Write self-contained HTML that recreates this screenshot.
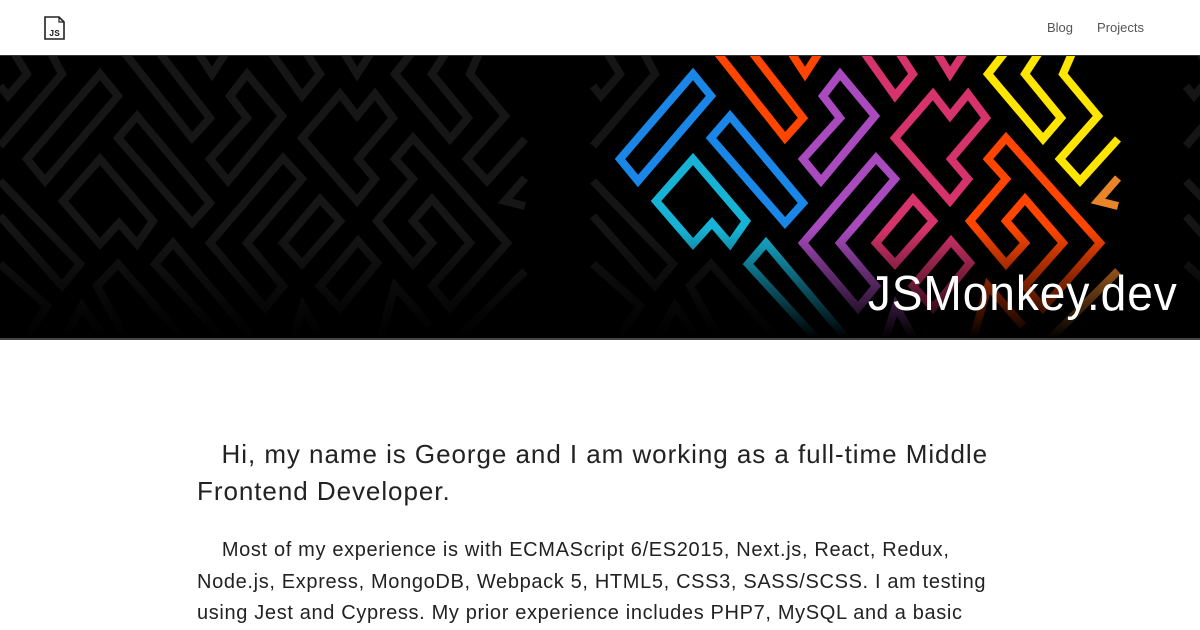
<!DOCTYPE html>
<html><head><meta charset="utf-8">
<style>
*{margin:0;padding:0;box-sizing:border-box}
body{width:1200px;height:630px;overflow:hidden;background:#fff;font-family:"Liberation Sans",sans-serif;color:#222}
header{height:55px;position:relative;background:#fff}
.logo{position:absolute;left:44px;top:16px}
nav{position:absolute;right:56px;top:20px;font-size:13px;color:#555}
nav span{margin-left:24px}
.banner{position:relative;height:285px;background:#000;overflow:hidden;border-top:1px solid #333;border-bottom:2px solid #444}
.banner svg{position:absolute;left:0;top:0}
.fade{position:absolute;left:0;right:0;bottom:0;height:110px;background:linear-gradient(rgba(0,0,0,0),#000)}
.title{position:absolute;right:22px;top:208px;color:#fff;font-size:49px;line-height:60px;letter-spacing:1px;transform:scaleX(.94);transform-origin:right center;white-space:nowrap}
.p1{position:absolute;left:197px;top:436px;font-size:26px;line-height:37px;white-space:nowrap;letter-spacing:0.95px}
.p2{position:absolute;left:197px;top:535px;font-size:20px;line-height:31.5px;white-space:nowrap;letter-spacing:0.65px}
</style></head><body>
<header>
<svg class="logo" width="22" height="24" viewBox="0 0 22 24"><path d="M1 1H15L20 6V23H1Z" fill="none" stroke="#222" stroke-width="1.6"/><path d="M15 1V6H20" fill="none" stroke="#222" stroke-width="1.2"/><text x="5" y="20" font-size="9" font-family="Liberation Mono,monospace" font-weight="bold" fill="#222">JS</text></svg>
<nav><span>Blog</span><span>Projects</span></nav>
</header>
<div class="banner">
<svg width="1200" height="285" viewBox="0 0 1200 285">
<defs>
<g id="m" fill="none" stroke-width="8" stroke-linejoin="miter">
<polygon points="27,103 100,18 118,40 45,125" style="stroke:var(--g,#1a86e8)"/>
<polygon points="118,82 137,60 210,147 192,167" style="stroke:var(--g,#1a86e8)"/>
<polygon points="63,145 100,103 153,165 137,188 119,167 100,188" style="stroke:var(--g,#17b3d6)"/>
<polyline points="123,-5 192,82 210,62 158,-5" style="stroke:var(--g,#ff4500)"/>
<polygon points="210,103 247,62 230,40 247,18 282,60 228,125" style="stroke:var(--g,#a94bbf)"/>
<polyline points="197,-5 212,18 227,-5" style="stroke:var(--g,#ff4500)"/>
<polyline points="270,-5 302,40 320,18 305,-5" style="stroke:var(--g,#d6336c)"/>
<polyline points="343,-5 357,18 372,-5" style="stroke:var(--g,#d6336c)"/>
<polygon points="302,82 340,38 357,60 375,38 393,62 358,103 375,123 357,145" style="stroke:var(--g,#d6336c)"/>
<polygon points="210,187 283,102 302,123 247,187 283,230 265,252" style="stroke:var(--g,#a94bbf)"/>
<polygon points="283,187 320,143 340,165 302,208" style="stroke:var(--g,#d6336c)"/>
<polygon points="320,230 358,185 377,207 340,252" style="stroke:var(--g,#d6336c)"/>
<polyline points="230,290 155,208 173,187 258,288" style="stroke:var(--g,#17b3d6)"/>
<polygon points="395,103 413,82 507,187 450,252 432,230 470,187 432,143 413,165 432,187 413,208 377,165 413,123" style="stroke:var(--g,#ff4500)"/>
<polyline points="413,-5 395,18 450,83 468,62 432,18 447,-5" style="stroke:var(--g,#ffe600)"/>
<polyline points="480,-5 470,18 505,60 467,103 487,125 525,83" style="stroke:var(--g,#ffe600)"/>
<polyline points="525,150 505,145 525,122" style="stroke:var(--g,#e8842a)"/>
<polyline points="525,215 450,290" style="stroke:var(--g,#e8842a)"/>
<polyline points="0,30 8,40 27,18 13,-5" style="stroke:#151515"/>
<polyline points="0,90 62,18 50,-5" style="stroke:#151515"/>
<polyline points="0,125 80,208 62,230 0,160" style="stroke:#151515"/>
<polyline points="0,208 47,250 27,280" style="stroke:#151515"/>
<polyline points="130,290 97,230 118,208 190,290" style="stroke:#151515"/>
<polyline points="60,290 82,250 110,290" style="stroke:#151515"/>
<polyline points="290,290 303,250 325,290" style="stroke:var(--g,#a94bbf)"/>
<polyline points="378,290 395,230 430,270" style="stroke:var(--g,#ff4500)"/>
</g>
</defs>
<use href="#m" x="0" y="0" style="--g:#161616"/>
<use href="#m" x="593" y="0"/>
<use href="#m" x="1186" y="0" style="--g:#161616"/>
</svg>
<div class="fade"></div>
<div class="title">JSMonkey.dev</div>
</div>
<div class="p1">&nbsp;&nbsp;&nbsp;Hi, my name is George and I am working as a full-time Middle<br>Frontend Developer.</div>
<div class="p2">&nbsp;&nbsp;&nbsp;&nbsp;Most of my experience is with ECMAScript 6/ES2015, Next.js, React, Redux,<br>Node.js, Express, MongoDB, Webpack 5, HTML5, CSS3, SASS/SCSS. I am testing<br>using Jest and Cypress. My prior experience includes PHP7, MySQL and a basic</div>
</body></html>
